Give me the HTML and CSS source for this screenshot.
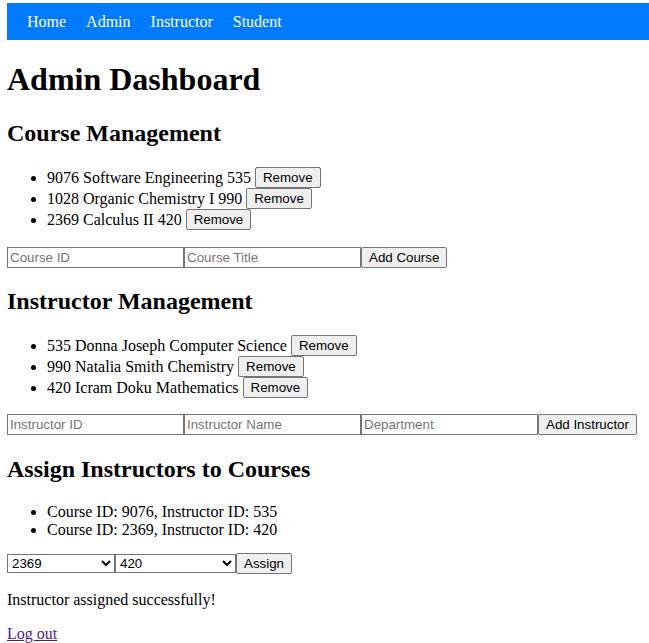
FILE: index.html
```html
<!DOCTYPE html>
<html>
<head>
<meta charset="utf-8">
<title>Admin Dashboard</title>
<link rel="stylesheet" href="styles.css">
</head>
<body>
<nav class="nav">
  <a href="#" class="nav-link">Home</a>
  <a href="#" class="nav-link">Admin</a>
  <a href="#" class="nav-link">Instructor</a>
  <a href="#" class="nav-link">Student</a>
</nav>
<main class="content">
  <h1 class="title">Admin Dashboard</h1>

  <h2 class="section-title">Course Management</h2>
  <ul class="list">
    <li>9076 Software Engineering 535 <button class="btn">Remove</button></li>
    <li>1028 Organic Chemistry I 990 <button class="btn">Remove</button></li>
    <li>2369 Calculus II 420 <button class="btn">Remove</button></li>
  </ul>
  <div class="form-row form-row-first"><input class="field" placeholder="Course ID"><input class="field" placeholder="Course Title"><button class="btn">Add Course</button></div>

  <h2 class="section-title section-title-tight">Instructor Management</h2>
  <ul class="list">
    <li>535 Donna Joseph Computer Science <button class="btn">Remove</button></li>
    <li>990 Natalia Smith Chemistry <button class="btn">Remove</button></li>
    <li>420 Icram Doku Mathematics <button class="btn">Remove</button></li>
  </ul>
  <div class="form-row"><input class="field" placeholder="Instructor ID"><input class="field" placeholder="Instructor Name"><input class="field" placeholder="Department"><button class="btn">Add Instructor</button></div>

  <h2 class="section-title">Assign Instructors to Courses</h2>
  <ul class="list list-plain">
    <li>Course ID: 9076, Instructor ID: 535</li>
    <li>Course ID: 2369, Instructor ID: 420</li>
  </ul>
  <div class="form-row form-row-assign"><select class="picker picker-course"><option>2369</option><option>9076</option><option>1028</option></select><select class="picker picker-instructor"><option>420</option><option>535</option><option>990</option></select><button class="btn">Assign</button></div>

  <p class="message">Instructor assigned successfully!</p>
  <a href="#" class="logout">Log out</a>
</main>
</body>
</html>
```

FILE: styles.css
```css
html, body {
  margin: 0;
  padding: 0;
}
body {
  padding: 3px 0 0 7px;
  font-family: "Liberation Serif", "Times New Roman", serif;
  font-size: 16px;
  color: #000;
  background: #fff;
}
.nav {
  background: #007bff;
  padding: 10px;
  height: 17px;
  display: flex;
  align-items: center;
}
.nav-link {
  color: #fff;
  text-decoration: none;
  margin: 0 10px;
  font-size: 16px;
  line-height: 18px;
}
.title {
  font-size: 32px;
  font-weight: bold;
  margin: 21px 0 21px 0;
  line-height: 37px;
}
.section-title {
  font-size: 24px;
  font-weight: bold;
  margin: 20px 0;
  line-height: 28px;
}
.title + .section-title {
  margin-top: 0;
}
.section-title-tight {
  margin-top: 19px;
}
.list {
  margin: 16px 0;
  padding-left: 40px;
}
.list li {
  height: 21px;
  line-height: 21px;
}
.list-plain {
  margin-bottom: 14px;
}
.list-plain li {
  height: 18px;
  line-height: 18px;
}
.form-row {
  display: flex;
  align-items: center;
  margin: 16px 0;
}
.form-row-first {
  margin-top: 17px;
  margin-bottom: 15px;
}
.form-row-assign {
  margin-top: 14px;
  margin-bottom: 17px;
}
.field {
  box-sizing: border-box;
  width: 177px;
  height: 21px;
  margin: 0;
  padding: 1px 2px;
  border: 1px solid #767676;
  border-radius: 0;
  font-family: "Liberation Sans", Arial, sans-serif;
  font-size: 13.33px;
  color: #000;
  background: #fff;
}
.field::placeholder {
  color: #757575;
}
.btn {
  box-sizing: border-box;
  height: 21px;
  margin: 0;
  padding: 1px 7px;
  border: 1px solid #767676;
  border-radius: 2px;
  background: #efefef;
  font-family: "Liberation Sans", Arial, sans-serif;
  font-size: 13.33px;
  line-height: 15px;
  color: #000;
  vertical-align: top;
}
.picker {
  box-sizing: border-box;
  height: 19px;
  margin: 0;
  border: 1px solid #767676;
  border-radius: 0;
  background: #fff;
  font-family: "Liberation Sans", Arial, sans-serif;
  font-size: 13.33px;
  color: #000;
}
.picker-course {
  width: 108px;
}
.picker-instructor {
  width: 121px;
}
.message {
  margin: 17px 0 16px;
}
.logout {
  color: #551a8b;
  text-decoration: underline;
}
```
